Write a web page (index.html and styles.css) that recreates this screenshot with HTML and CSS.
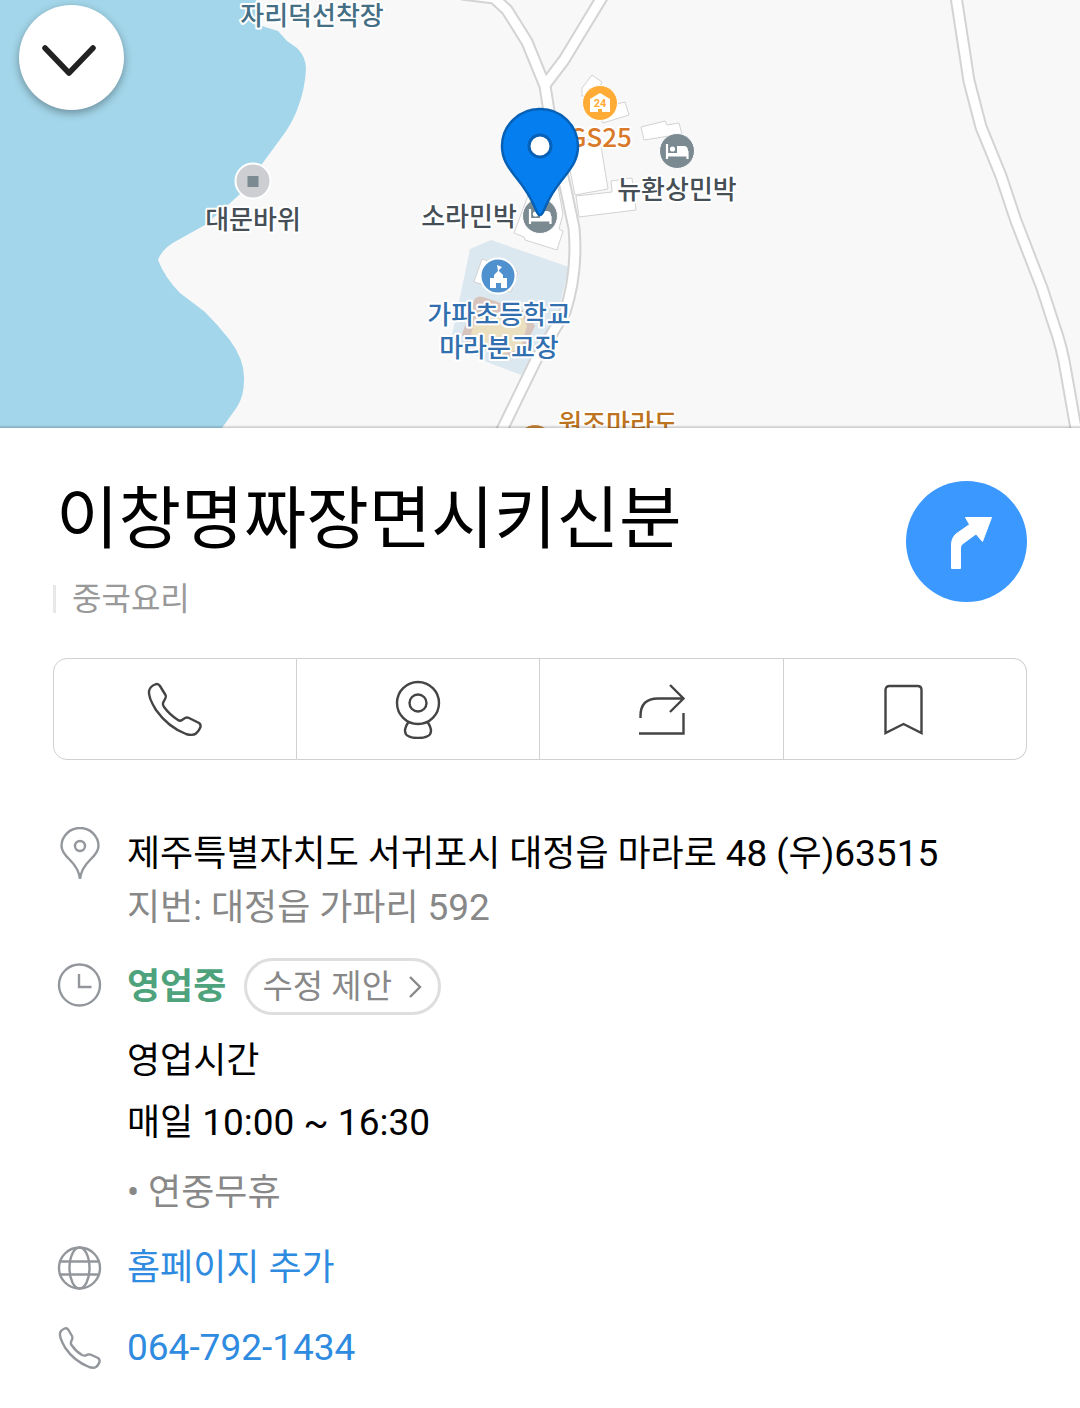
FILE: index.html
```html
<!DOCTYPE html>
<html lang="ko">
<head>
<meta charset="utf-8">
<meta name="viewport" content="width=device-width, initial-scale=1">
<title>이창명짜장면시키신분</title>
<link rel="stylesheet" href="styles.css">
</head>
<body>
<main class="place">
  <section class="map" aria-label="지도">
    <svg class="map-canvas" viewBox="0 0 1080 428" preserveAspectRatio="xMidYMin slice">
      <defs>
        <g id="bed">
          <circle r="17.5" fill="#7b8990" stroke="#fff" stroke-width="1"/>
          <path d="M-10-7V8M-9.500 4.500H9.500M10.500 8V0" fill="none" stroke="#fff" stroke-width="2.200"/>
          <circle cx="-4.500" cy="-2" r="2.600" fill="#fff"/>
          <path d="M0-5H7Q11-5 11 0V5H-9V2H0Z" fill="#fff"/>
        </g>
      </defs>
      <rect width="1080" height="428" fill="#f8f8f8"/>
      <path fill="#a3d6ea" d="M0 0H256L262 26L278 31L287 41L297 48Q306 57 306 69Q305 90 297 110Q292 123 284 134L262 164L240 194L228 205L205 225L178 240Q162 248 158 260Q165 278 180 293L205 312Q218 325 229 339Q245 360 244 380Q244 396 237 407L222 428H0Z"/>
      <path fill="#dce8f0" d="M470 249L491 240L569 267L556 320L521 375L487 362L451 340Z"/>
      <path fill="#d7c4bd" d="M473 303Q475 295 483 297L527 312L535 326L521 354L510 357L466 344L462 334Z"/>
      <path fill="#eadfbf" d="M476 318L522 314L527 326L520 350L500 354L471 334Z"/>
      <g fill="#fff" stroke="#d2d2d2" stroke-width="1">
        <path d="M482 259L518 272L511 292L474 282Z"/>
        <path d="M592 75L602 82L595 96L582 96V88Z"/>
        <path d="M599 115L603 107L625 102L629 115L603 123Z"/>
        <path d="M641 127L665 121L667 125L679 123L682 134L644 140Z"/>
        <path d="M570 140H600L608 189L575 195L566 150Z"/>
        <path d="M576 196L612 192L611 181L632 178L636 210L579 217Z"/>
        <path d="M529 193L558 187L563 214L559 229L563 231L557 250L525 240L524 237L514 233Z"/>
      </g>
      <g fill="none" stroke-linejoin="round">
        <g stroke="#d3d3d3" stroke-width="13">
          <path d="M462-6L494-2L507 10L527 42L545 86L552 130L566 190L574 228Q578 272 565 312L536 360L500 434"/>
          <path d="M604-6L564 60L545 85"/>
          <path d="M955-10L969 81L981 127L1001 176L1016 221L1042 288L1054 325Q1062 347 1066 372L1078 440"/>
        </g>
        <g stroke="#fff" stroke-width="9">
          <path d="M462-6L494-2L507 10L527 42L545 86L552 130L566 190L574 228Q578 272 565 312L536 360L500 434"/>
          <path d="M604-6L564 60L545 85"/>
          <path d="M955-10L969 81L981 127L1001 176L1016 221L1042 288L1054 325Q1062 347 1066 372L1078 440"/>
        </g>
      </g>
      <g stroke="#fff">
        <circle cx="253" cy="181" r="17.500" fill="#cdced2" stroke-width="2"/>
        <rect x="247.500" y="176" width="11" height="11" fill="#7b8990" stroke="none"/>
        <circle cx="600" cy="103" r="17.500" fill="#ffab35" stroke-width="1"/>
        <circle cx="498" cy="276" r="17.500" fill="#4f90cf" stroke-width="2"/>
        <circle cx="535" cy="442" r="17.500" fill="#c8863a" stroke-width="1"/>
      </g>
      <path fill="#fff" d="M600 93L610 99V112H602V109H598V112H590V99Z"/>
      <text class="store-mark" x="600" y="107">24</text>
      <path fill="#fff" d="M497 265L502 267L499 270V271L503 275V278H507V288H501V283H496V288H490V278H494V275L498 271Z"/>
      <use href="#bed" x="677" y="151"/>
      <use href="#bed" x="540" y="216"/>
      <g class="labels">
        <text class="teal" x="312" y="25">자리덕선착장</text>
        <text x="253" y="229">대문바위</text>
        <text x="469" y="226">소라민박</text>
        <text x="677" y="199">뉴환상민박</text>
        <text class="orange" x="600" y="147">GS25</text>
        <text class="blue" x="499" y="324">가파초등학교</text>
        <text class="blue" x="499" y="357">마라분교장</text>
        <text class="gold" x="618" y="433">원조마라도</text>
      </g>
      <path fill="#057fef" stroke="#0660b5" stroke-width="2.500" stroke-linejoin="round" d="M540 109A37.500 37.500 0 0 0 502 146C502 159 508 167 515 176C524 187 531 197 536 210Q538 215 540 215Q542 215 544 210C549 197 556 187 565 176C572 167 578 159 578 146A37.500 37.500 0 0 0 540 109Z"/>
      <circle cx="540" cy="146" r="11" fill="#fff" stroke="#0660b5" stroke-width="3"/>
    </svg>
    <button class="collapse" type="button" aria-label="접기">
      <svg width="60" height="40" viewBox="0 0 60 40" fill="none" stroke="#222" stroke-width="5.500" stroke-linecap="round" stroke-linejoin="round"><path d="M3 10L27 35L51 10"/></svg>
    </button>
  </section>

  <section class="sheet">
    <header class="head">
      <div class="names">
        <h1 class="title">이창명짜장면시키신분</h1>
        <p class="category">중국요리</p>
      </div>
      <button class="route" type="button" aria-label="길찾기">
        <svg width="121" height="121" viewBox="0 0 121 121" fill="#fff" stroke="#fff" stroke-width="1" stroke-linejoin="round"><path d="M45.500 87.500V64Q45.500 57 50 53L63.500 43.500L59.500 36.500H85.500L76.500 60.500L70 53L57 62.500Q54.500 64 54.500 67V87.500Z"/></svg>
      </button>
    </header>

    <nav class="actions">
      <button type="button" aria-label="전화">
        <svg width="60" height="60" viewBox="0 0 60 60"><path d="M10 5.500Q13 4 15 7L20.500 16Q21.500 17.500 20.500 19L18 24Q17.500 26 19 28Q25 36 33 41Q35 42.500 37 41L40 39Q42 38 44 39L54 44Q56 45.500 55.500 48Q54 52 51 54.500Q48 57 41 55Q23 48 11 31Q3 18 4 12Q5 7.500 10 5.500Z"/></svg>
      </button>
      <button type="button" aria-label="로드뷰">
        <svg width="60" height="60" viewBox="0 0 60 60"><circle cx="30" cy="24" r="21"/><circle cx="30" cy="24" r="8.500"/><path d="M20.500 43Q17 48 17 52Q17 59 30 59Q43 59 43 52Q43 48 39.500 43"/></svg>
      </button>
      <button type="button" aria-label="공유">
        <svg width="60" height="60" viewBox="0 0 60 60"><path d="M9.500 39V37Q9.500 19.500 27 19.500H52M39 6L52.500 19.500L39 33M8 54.500H52.500V34"/></svg>
      </button>
      <button type="button" aria-label="저장">
        <svg width="60" height="60" viewBox="0 0 60 60"><path d="M10.500 54V11Q10.500 7 14.500 7H42.500Q46.500 7 46.500 11V54L28.500 45Z"/></svg>
      </button>
    </nav>

    <ul class="info">
      <li class="row">
        <svg class="icon" width="54" height="54" viewBox="0 0 54 54"><path d="M27 52Q26 42 17 33Q8.500 25 8.500 19A18.500 18 0 0 1 45.500 19Q45.500 25 37 33Q28 42 27 52Z"/><circle cx="27" cy="19" r="5"/></svg>
        <div class="body">
          <p>제주특별자치도 서귀포시 대정읍 마라로 <span class="num">48</span> (우)<span class="num">63515</span></p>
          <p class="muted">지번: 대정읍 가파리 <span class="num">592</span></p>
        </div>
      </li>
      <li class="row">
        <svg class="icon" width="54" height="54" viewBox="0 0 54 54"><circle cx="26.500" cy="27" r="20.500"/><path d="M26 16V29H38.500"/></svg>
        <div class="body">
          <div class="status">
            <strong class="open">영업중</strong>
            <button class="suggest" type="button">수정 제안
              <svg width="14" height="24" viewBox="0 0 14 24"><path d="M2 2L12 12L2 22"/></svg>
            </button>
          </div>
          <div class="hours">
            <p>영업시간</p>
            <p>매일 <span class="num">10:00 ~ 16:30</span></p>
            <p class="muted">• 연중무휴</p>
          </div>
        </div>
      </li>
      <li class="row">
        <svg class="icon" width="54" height="54" viewBox="0 0 54 54"><circle cx="26.500" cy="27" r="20.500"/><ellipse cx="26.500" cy="27" rx="10" ry="20.500"/><path d="M7.500 20.500H45.500M7.500 33.500H45.500"/></svg>
        <div class="body"><a href="#homepage">홈페이지 추가</a></div>
      </li>
      <li class="row">
        <svg class="icon" width="54" height="54" viewBox="0 0 54 54"><path d="M11.500 7.500Q14 6.500 15.500 9L19 15Q20 17 19 18.500L18 21Q17.500 22.500 18.500 24Q23 30.500 29 34Q31 35 32.500 34.500L35 33.500Q37 33 38.500 34L45 37Q47 38.500 46.500 41Q45.500 44 43 46Q40.500 47.500 36 46Q21 40 12 26.500Q6 16 7 12Q8 9 11.500 7.500Z"/></svg>
        <div class="body"><a class="num" href="tel:064-792-1434">064-792-1434</a></div>
      </li>
    </ul>
  </section>
</main>
</body>
</html>
```

FILE: styles.css
```css
* { box-sizing: border-box; }

body {
  margin: 0;
  background: #fff;
  color: #000;
  font-family: Roboto, "Noto Sans CJK KR", sans-serif;
}

h1, p, ul { margin: 0; padding: 0; font-weight: 400; }
ul { list-style: none; }

button {
  margin: 0;
  padding: 0;
  border: 0;
  background: none;
  color: inherit;
  font: inherit;
  cursor: pointer;
}

svg { display: block; }

/* Map */
.map {
  position: relative;
  overflow: hidden;
}

.map::after {
  content: "";
  position: absolute;
  right: 0;
  bottom: 0;
  left: 0;
  height: 3px;
  background: linear-gradient(rgba(0, 0, 0, 0), rgba(0, 0, 0, .2));
}

.map-canvas { width: 100%; height: 428px; }

.labels text {
  fill: #464f56;
  stroke: #fff;
  stroke-width: 4px;
  stroke-linejoin: round;
  paint-order: stroke;
  font: 500 26px "Noto Sans CJK KR", sans-serif;
  text-anchor: middle;
}
.labels .teal { fill: #456f84; }
.labels .blue { fill: #316fae; }
.labels .orange { fill: #d97a2b; }
.labels .gold { fill: #bd7420; }

.store-mark {
  fill: #ffab35;
  font: 700 11px Roboto, sans-serif;
  text-anchor: middle;
}

.collapse {
  position: absolute;
  top: 5px;
  left: 19px;
  display: grid;
  place-items: center;
  width: 105px;
  height: 105px;
  border-radius: 50%;
  background: #fff;
  box-shadow: 0 3px 8px rgba(0, 0, 0, .35);
}

/* Place sheet */
.sheet { padding: 52px 53px 32px; }

.head {
  display: flex;
  justify-content: space-between;
  align-items: flex-start;
}

.title { padding-left: 3px; font-size: 68px; line-height: 80px; }

.category {
  display: flex;
  align-items: center;
  gap: 16px;
  margin-top: 19px;
  color: #999;
  font-size: 32px;
  line-height: 40px;
}
.category::before {
  content: "";
  width: 3px;
  height: 28px;
  background: #e8e8e8;
}

.route {
  flex: none;
  margin-top: 1px;
  border-radius: 50%;
  background: #3a98ff;
}

.actions {
  display: grid;
  grid-template-columns: repeat(4, 1fr);
  height: 102px;
  margin-top: 39px;
}
.actions button {
  display: grid;
  place-items: center;
  border: 1px solid #d0d0d0;
  border-left-width: 0;
}
.actions button:first-child {
  border-left-width: 1px;
  border-radius: 14px 0 0 14px;
}
.actions button:last-child { border-radius: 0 14px 14px 0; }
.actions svg {
  fill: none;
  stroke: #444;
  stroke-width: 2.4px;
}

/* Details */
.info {
  display: flex;
  flex-direction: column;
  margin-top: 67px;
  font-size: 36px;
  line-height: 54px;
}

.row { display: flex; gap: 20px; }
.row:nth-child(2) { margin-top: 23px; }
.row:nth-child(3) { margin-top: 17px; }
.row:nth-child(4) { margin-top: 26px; }

.icon {
  flex: none;
  fill: none;
  stroke: #93979c;
  stroke-width: 2.4px;
}

.body { flex: 1; min-width: 0; }
.row a { color: #2f8be0; text-decoration: none; }
.num { font-size: 37px; }
.muted { color: #888; }

.status { display: flex; align-items: center; gap: 18px; }
.open { color: #4ea37c; font-weight: 700; }

.suggest {
  display: flex;
  align-items: center;
  gap: 16px;
  height: 57px;
  padding: 0 16px 0 15px;
  border: 3px solid #dedede;
  border-radius: 29px;
  color: #888;
  font-size: 33px;
}
.suggest svg { fill: none; stroke: #888; stroke-width: 2.4px; }

.hours { margin-top: 15px; line-height: 62px; }
.hours .muted { margin-top: 8px; }
```
